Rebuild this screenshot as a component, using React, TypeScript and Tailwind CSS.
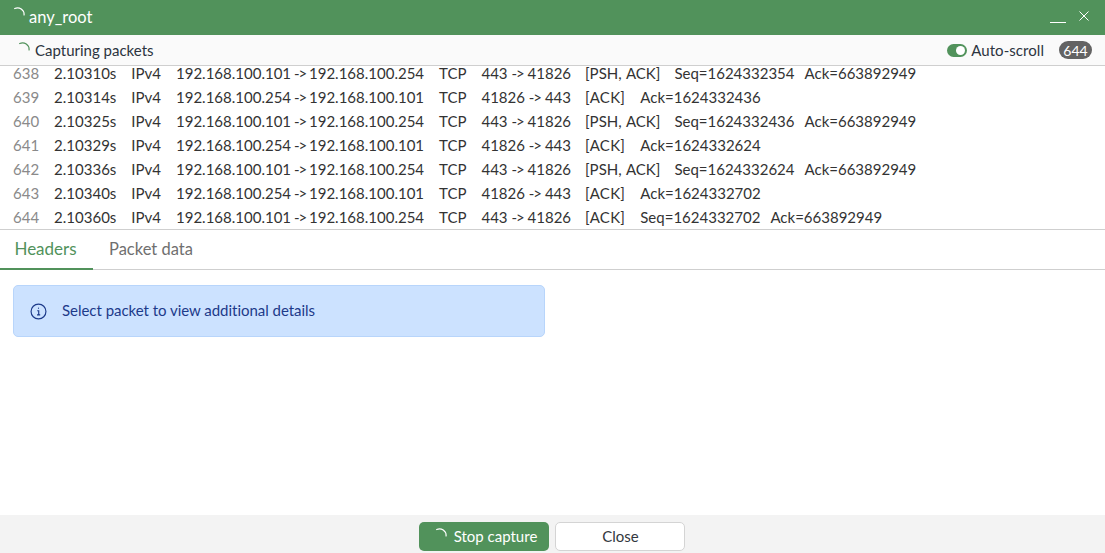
import React from "react";

const rows = [
  ["638", "2.10310s", "192.168.100.101", "192.168.100.254", "443", "41826", "[PSH, ACK]", "Seq=1624332354", "Ack=663892949"],
  ["639", "2.10314s", "192.168.100.254", "192.168.100.101", "41826", "443", "[ACK]", "Ack=1624332436", ""],
  ["640", "2.10325s", "192.168.100.101", "192.168.100.254", "443", "41826", "[PSH, ACK]", "Seq=1624332436", "Ack=663892949"],
  ["641", "2.10329s", "192.168.100.254", "192.168.100.101", "41826", "443", "[ACK]", "Ack=1624332624", ""],
  ["642", "2.10336s", "192.168.100.101", "192.168.100.254", "443", "41826", "[PSH, ACK]", "Seq=1624332624", "Ack=663892949"],
  ["643", "2.10340s", "192.168.100.254", "192.168.100.101", "41826", "443", "[ACK]", "Ack=1624332702", ""],
  ["644", "2.10360s", "192.168.100.101", "192.168.100.254", "443", "41826", "[ACK]", "Seq=1624332702", "Ack=663892949"],
];

function Spinner({ color, className }: { color: string; className: string }) {
  return (
    <svg viewBox="0 0 16 16" className={className} fill="none">
      <path d="M5 1.6 A7 7 0 0 1 15 8.5" stroke={color} strokeWidth="1.3" strokeLinecap="round" />
    </svg>
  );
}

export default function App() {
  return (
    <div className="w-[1105px] h-[553px] flex flex-col bg-white overflow-hidden font-['Lato','Noto_Sans',sans-serif] text-[15px] text-[#333840]">
      <header className="h-[35px] shrink-0 bg-[#51925b] flex items-center pl-[10px] pr-[15px] text-white">
        <Spinner color="#ffffff" className="w-[15px] h-[15px] -mt-[6px]" />
        <span className="ml-[4px] text-[16.5px] leading-[20px] -mt-[2px]">any_root</span>
        <div className="ml-auto flex items-center gap-[12px]">
          <span className="block w-[16px] h-px bg-white mt-[10px]" />
          <svg viewBox="0 0 12 12" className="w-[12px] h-[12px] -mt-[4px]" stroke="#ffffff" strokeWidth="1">
            <path d="M1.5 1.5 L10.5 10.5 M10.5 1.5 L1.5 10.5" />
          </svg>
        </div>
      </header>

      <div className="h-[31px] shrink-0 bg-[#fafafa] border-b border-[#cfcfcf] flex items-center pl-[15px] pr-[13px] text-[#2c3440]">
        <Spinner color="#51925b" className="w-[15px] h-[15px] -mt-[2px]" />
        <span className="ml-[5px]">Capturing packets</span>
        <div className="ml-auto flex items-center">
          <span className="w-[20px] h-[13px] rounded-full bg-[#51925b] flex items-center justify-end pr-[2px]">
            <span className="w-[9px] h-[9px] rounded-full bg-white" />
          </span>
          <span className="ml-[4px] tracking-[0.05px]">Auto-scroll</span>
          <span className="ml-[15px] w-[33px] h-[18px] rounded-full bg-[#636363] text-white text-[14px] flex items-center justify-center">644</span>
        </div>
      </div>

      <div className="h-[164px] shrink-0 overflow-hidden flex flex-col justify-end border-b border-[#cfcfcf]">
        {rows.map((r) => (
          <div key={r[0]} className="h-[24px] shrink-0 flex items-center gap-[15px] pl-[13px] whitespace-pre text-[#333333]">
            <span className="text-[#8a8a8a]">{r[0]}</span>
            <span>{r[1]}</span>
            <span>IPv4</span>
            <span className="[word-spacing:-1px]">
              {r[2]} <span className="tracking-[-1px]">{"->"}</span> {r[3]}
            </span>
            <span>TCP</span>
            <span>
              {r[4]} <span className="tracking-[-1px]">{"->"}</span> {r[5]}
            </span>
            <span className={r[6] === "[ACK]" ? "-ml-px tracking-[0.3px]" : "-ml-px -mr-px [word-spacing:1px]"}>{r[6]}</span>
            <span>{r[7]}</span>
            {r[8] && <span className="-ml-[5px]">{r[8]}</span>}
          </div>
        ))}
      </div>

      <nav className="h-[40px] shrink-0 border-b border-[#cfcfcf] flex">
        <div className="w-[93px] h-[40px] flex items-center justify-center pr-[2px] text-[17px] text-[#51925b] border-b-2 border-[#51925b]">Headers</div>
        <div className="px-[16px] h-[39px] flex items-center text-[16.5px] text-[#6f6f6f]">Packet data</div>
      </nav>

      <main className="flex-1 pt-[15px] pl-[13px]">
        <div className="w-[532px] h-[52px] rounded-[5px] bg-[#cce2ff] border border-[#b8d5fb] flex items-center pl-[16px] text-[#1d3a8a]">
          <svg viewBox="0 0 16 16" className="w-[17px] h-[17px]" fill="none" stroke="#1d3a8a" strokeWidth="1.1">
            <circle cx="8" cy="8" r="7" />
            <path d="M6.8 7.3 H8.2 V11.2 M6.6 11.2 H9.6" />
            <circle cx="8" cy="4.9" r="0.55" fill="#1d3a8a" stroke="none" />
          </svg>
          <span className="ml-[15px] -mt-[2px] tracking-[-0.03px]">Select packet to view additional details</span>
        </div>
      </main>

      <footer className="h-[38px] shrink-0 bg-[#f3f3f3] flex items-center justify-center gap-[6px] pt-[6px] pb-[1px] pr-[2px]">
        <button className="w-[130px] h-[29px] rounded-[5px] bg-[#51925b] text-white flex items-center justify-center pl-[2px]">
          <Spinner color="#ffffff" className="w-[15px] h-[15px] -mt-[3px]" />
          <span className="ml-[7px]">Stop capture</span>
        </button>
        <button className="w-[130px] h-[29px] rounded-[5px] bg-white border border-[#d4d4d4] text-[#333840] flex items-center justify-center pl-[2px]">Close</button>
      </footer>
    </div>
  );
}
